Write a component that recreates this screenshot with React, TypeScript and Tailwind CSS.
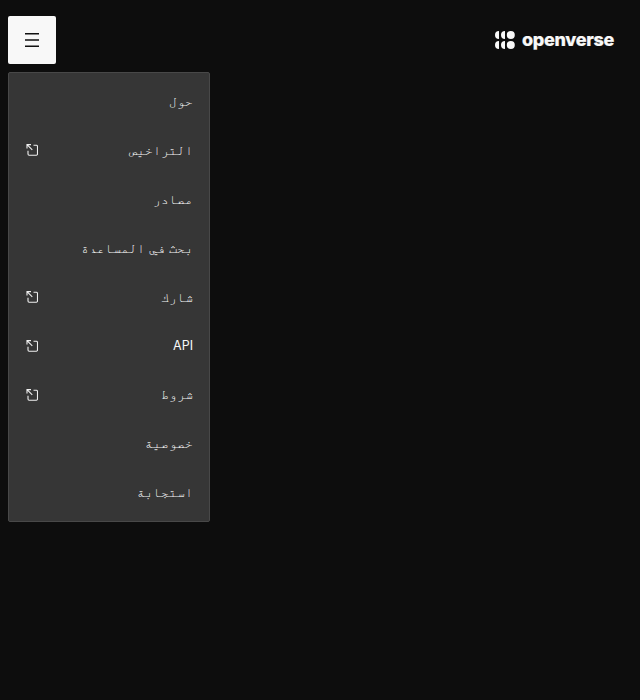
const items: { label: string; external?: boolean }[] = [
  { label: "حول" },
  { label: "التراخيص", external: true },
  { label: "مصادر" },
  { label: "بحث في المساعدة" },
  { label: "شارك", external: true },
  { label: "API", external: true },
  { label: "شروط", external: true },
  { label: "خصوصية" },
  { label: "استجابة" },
];

function MenuIcon() {
  return (
    <svg width="14" height="14" viewBox="0 0 14 14" className="text-[#111]" fill="currentColor">
      <path d="M0 0h14v1.5H0zM0 6.25h14v1.5H0zM0 12.5h14V14H0z" />
    </svg>
  );
}

function ExternalIcon() {
  return (
    <svg width="12" height="12" viewBox="0 0 12 12" fill="none" stroke="#f0f0f0" strokeWidth="1.1">
      <path d="M1 4.5V0.6H5M1 0.6L6.3 5.9M7.5 1.3H10.4a1.1 1.1 0 0 1 1.1 1.1V10.1a1.1 1.1 0 0 1-1.1 1.1H3.1A1.1 1.1 0 0 1 2 10.1V6.8" />
    </svg>
  );
}

function Logo() {
  return (
    <div className="flex items-center gap-[7px] text-[#f8f8f8]">
      <svg width="20" height="18" viewBox="0 0 20 18" fill="currentColor">
        <circle cx="15.8" cy="4" r="4" />
        <circle cx="15.8" cy="14" r="4" />
        <path d="M4 0a4 4 0 0 0 0 8zM10 0a4 4 0 0 0 0 8zM4 10a4 4 0 0 0 0 8zM10 10a4 4 0 0 0 0 8z" />
      </svg>
      <span className="w-[93px] font-['Inter',sans-serif] text-[18px] leading-[22px] font-extrabold tracking-[-0.3px] [-webkit-text-stroke:0.2px_#f8f8f8]">openverse</span>
    </div>
  );
}

export default function App() {
  return (
    <div dir="rtl" className="min-h-[700px] bg-[#0d0d0d] px-2 pt-4 font-['Inter','FreeMono',monospace]">
      <header dir="ltr" className="flex h-12 items-center justify-between pr-[17px]">
        <button className="flex size-12 items-center justify-center rounded-[2px] bg-[#f8f8f8]" aria-label="menu">
          <MenuIcon />
        </button>
        <Logo />
      </header>
      <nav className="mt-2 mr-auto flex h-[450px] w-[202px] flex-col rounded-[2px] border border-[#484848] bg-[#363636] py-1">
        {items.map((item) => (
          <a key={item.label} className="flex flex-1 items-center justify-between px-4 text-[13.33px] leading-[17px] text-[#f8f8f8] [word-spacing:0.25px]">
            <span className={item.label === "API" ? "text-[12.5px]" : ""}>{item.label}</span>
            {item.external && (
              <span className="ml-px">
                <ExternalIcon />
              </span>
            )}
          </a>
        ))}
      </nav>
    </div>
  );
}
